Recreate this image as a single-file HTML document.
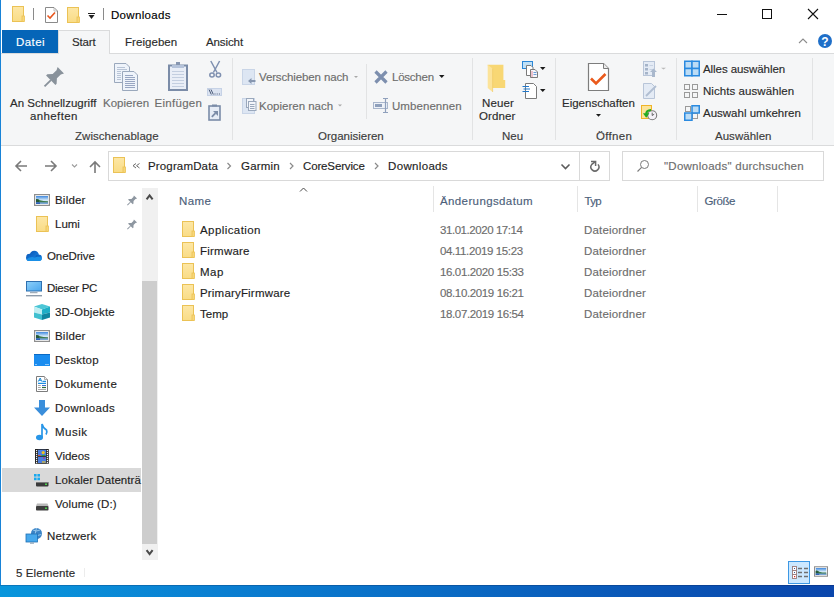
<!DOCTYPE html>
<html><head><meta charset="utf-8">
<style>
*{margin:0;padding:0;box-sizing:border-box}
html,body{width:834px;height:597px;overflow:hidden;background:#fff}
body{position:relative;font-family:"Liberation Sans",sans-serif;font-size:12px;color:#000}
.a{position:absolute}
.t{position:absolute;white-space:nowrap;line-height:14px;font-size:11.5px;-webkit-text-stroke:0.15px currentColor}
svg{position:absolute;overflow:visible}
</style></head><body>
<div class="a" style="left:0;top:585px;width:834px;height:12px;background:linear-gradient(90deg,#0996dc 0%,#0a80d2 25%,#0a6ec6 50%,#0a58b8 75%,#0a46ac 100%)"></div>
<div class="a" style="left:0;top:585px;width:834px;height:1px;background:linear-gradient(90deg,#0a78bc 0%,#0a58a4 50%,#0a3890 100%)"></div>
<div class="a" style="left:0;top:0;width:1px;height:585px;background:#1883d7"></div>
<div class="a" style="left:2px;top:30px;width:56px;height:23px;background:#0565b8"></div>
<div class="a" style="left:58px;top:30px;width:52px;height:24px;background:#f5f6f7;border:1px solid #dadbdc;border-bottom:none"></div>
<div class="a" style="left:1px;top:53px;width:833px;height:93px;background:#f5f6f7;border-top:1px solid #dadbdc;border-bottom:1px solid #dadbdc"></div>
<div class="a" style="left:59px;top:53px;width:50px;height:1px;background:#f5f6f7"></div>
<div class="a" style="left:232px;top:58px;width:1px;height:82px;background:#e2e3e4"></div>
<div class="a" style="left:366px;top:64px;width:1px;height:55px;background:#e2e3e4"></div>
<div class="a" style="left:472px;top:58px;width:1px;height:82px;background:#e2e3e4"></div>
<div class="a" style="left:555px;top:58px;width:1px;height:82px;background:#e2e3e4"></div>
<div class="a" style="left:676px;top:58px;width:1px;height:82px;background:#e2e3e4"></div>
<div class="a" style="left:812px;top:58px;width:1px;height:82px;background:#e2e3e4"></div>
<div class="a" style="left:108px;top:151px;width:502px;height:30px;border:1px solid #d9d9d9"></div>
<div class="a" style="left:579px;top:151px;width:1px;height:30px;background:#d9d9d9"></div>
<div class="a" style="left:622px;top:151px;width:202px;height:30px;border:1px solid #d9d9d9"></div>
<div class="a" style="left:2px;top:468px;width:139px;height:24px;background:#d9d9d9"></div>
<div class="a" style="left:142px;top:188px;width:16px;height:372px;background:#f0f0f0"></div>
<div class="a" style="left:142px;top:281px;width:15px;height:263px;background:#cdcdcd"></div>
<div class="a" style="left:433px;top:186px;width:1px;height:26px;background:#e5e5e5"></div>
<div class="a" style="left:577px;top:186px;width:1px;height:26px;background:#e5e5e5"></div>
<div class="a" style="left:697px;top:186px;width:1px;height:26px;background:#e5e5e5"></div>
<div class="a" style="left:777px;top:186px;width:1px;height:26px;background:#e5e5e5"></div>
<div class="t" style="left:111px;top:8.0px;color:#000;letter-spacing:0.312px">Downloads</div>
<div class="t" style="left:16px;top:35.0px;color:#fff;letter-spacing:0.450px">Datei</div>
<div class="t" style="left:72px;top:35.0px;color:#2b2b2b;letter-spacing:-0.175px">Start</div>
<div class="t" style="left:125px;top:35.0px;color:#2b2b2b;letter-spacing:0.050px">Freigeben</div>
<div class="t" style="left:206px;top:35.0px;color:#2b2b2b;letter-spacing:-0.100px">Ansicht</div>
<div class="t" style="left:10px;top:96.0px;color:#2b2b2b;letter-spacing:0.019px">An Schnellzugriff</div>
<div class="t" style="left:30px;top:108.5px;color:#2b2b2b;letter-spacing:0.371px">anheften</div>
<div class="t" style="left:103px;top:96.0px;color:#6d6d6d;letter-spacing:0.000px">Kopieren</div>
<div class="t" style="left:154.5px;top:96.0px;color:#6d6d6d;letter-spacing:0.286px">Einfügen</div>
<div class="t" style="left:75px;top:129.0px;color:#3c3c3c;letter-spacing:0.046px">Zwischenablage</div>
<div class="t" style="left:259px;top:70.0px;color:#6d6d6d;letter-spacing:-0.133px">Verschieben nach</div>
<div class="t" style="left:259px;top:99.0px;color:#6d6d6d;letter-spacing:0.000px">Kopieren nach</div>
<div class="t" style="left:392px;top:70.0px;color:#6d6d6d;letter-spacing:-0.233px">Löschen</div>
<div class="t" style="left:392px;top:99.0px;color:#6d6d6d;letter-spacing:0.067px">Umbenennen</div>
<div class="t" style="left:318px;top:129.0px;color:#3c3c3c;letter-spacing:-0.009px">Organisieren</div>
<div class="t" style="left:482px;top:96.0px;color:#2b2b2b;letter-spacing:0.150px">Neuer</div>
<div class="t" style="left:479px;top:108.5px;color:#2b2b2b;letter-spacing:0.100px">Ordner</div>
<div class="t" style="left:502px;top:129.0px;color:#3c3c3c;letter-spacing:0.050px">Neu</div>
<div class="t" style="left:562px;top:96.0px;color:#2b2b2b;letter-spacing:0.000px">Eigenschaften</div>
<div class="t" style="left:596px;top:129.0px;color:#3c3c3c;letter-spacing:0.320px">Öffnen</div>
<div class="t" style="left:703px;top:62.0px;color:#2b2b2b;letter-spacing:-0.071px">Alles auswählen</div>
<div class="t" style="left:703px;top:84.0px;color:#2b2b2b;letter-spacing:0.067px">Nichts auswählen</div>
<div class="t" style="left:703px;top:106.0px;color:#2b2b2b;letter-spacing:0.000px">Auswahl umkehren</div>
<div class="t" style="left:715px;top:129.0px;color:#3c3c3c;letter-spacing:0.025px">Auswählen</div>
<div class="t" style="left:148px;top:159.0px;color:#1e1e1e;letter-spacing:0.150px">ProgramData</div>
<div class="t" style="left:241px;top:159.0px;color:#1e1e1e;letter-spacing:0.200px">Garmin</div>
<div class="t" style="left:303px;top:159.0px;color:#1e1e1e;letter-spacing:-0.140px">CoreService</div>
<div class="t" style="left:388px;top:159.0px;color:#1e1e1e;letter-spacing:0.338px">Downloads</div>
<div class="t" style="left:664px;top:159.0px;color:#6d6d6d;letter-spacing:0.250px">"Downloads" durchsuchen</div>
<div class="t" style="left:55px;top:193.0px;color:#1e1e1e;letter-spacing:0.200px">Bilder</div>
<div class="t" style="left:55px;top:217.0px;color:#1e1e1e;letter-spacing:0.000px">Lumi</div>
<div class="t" style="left:47px;top:249.0px;color:#1e1e1e;letter-spacing:-0.100px">OneDrive</div>
<div class="t" style="left:47px;top:281.0px;color:#1e1e1e;letter-spacing:-0.250px">Dieser PC</div>
<div class="t" style="left:55px;top:305.0px;color:#1e1e1e;letter-spacing:0.167px">3D-Objekte</div>
<div class="t" style="left:55px;top:329.0px;color:#1e1e1e;letter-spacing:0.200px">Bilder</div>
<div class="t" style="left:55px;top:353.0px;color:#1e1e1e;letter-spacing:0.233px">Desktop</div>
<div class="t" style="left:55px;top:377.0px;color:#1e1e1e;letter-spacing:0.375px">Dokumente</div>
<div class="t" style="left:55px;top:401.0px;color:#1e1e1e;letter-spacing:0.350px">Downloads</div>
<div class="t" style="left:55px;top:425.0px;color:#1e1e1e;letter-spacing:0.500px">Musik</div>
<div class="t" style="left:55px;top:449.0px;color:#1e1e1e;letter-spacing:-0.040px">Videos</div>
<div class="t" style="left:55px;top:497.0px;color:#1e1e1e;letter-spacing:0.080px">Volume (D:)</div>
<div class="t" style="left:47px;top:529.0px;color:#1e1e1e;letter-spacing:0.186px">Netzwerk</div>
<div class="t" style="left:179px;top:194.0px;color:#4c607a;letter-spacing:0.433px">Name</div>
<div class="t" style="left:440px;top:194.0px;color:#4c607a;letter-spacing:0.385px">Änderungsdatum</div>
<div class="t" style="left:584.5px;top:194.0px;color:#4c607a;letter-spacing:-0.700px">Typ</div>
<div class="t" style="left:704.5px;top:194.0px;color:#4c607a;letter-spacing:-0.425px">Größe</div>
<div class="t" style="left:200px;top:223.0px;color:#1e1e1e;letter-spacing:0.420px">Application</div>
<div class="t" style="left:440px;top:223.0px;color:#6d6d6d;letter-spacing:-0.440px">31.01.2020 17:14</div>
<div class="t" style="left:584px;top:223.0px;color:#6d6d6d;letter-spacing:0.170px">Dateiordner</div>
<div class="t" style="left:200px;top:244.0px;color:#1e1e1e;letter-spacing:0.229px">Firmware</div>
<div class="t" style="left:440px;top:244.0px;color:#6d6d6d;letter-spacing:-0.373px">04.11.2019 15:23</div>
<div class="t" style="left:584px;top:244.0px;color:#6d6d6d;letter-spacing:0.170px">Dateiordner</div>
<div class="t" style="left:200px;top:265.0px;color:#1e1e1e;letter-spacing:0.500px">Map</div>
<div class="t" style="left:440px;top:265.0px;color:#6d6d6d;letter-spacing:-0.373px">16.01.2020 15:33</div>
<div class="t" style="left:584px;top:265.0px;color:#6d6d6d;letter-spacing:0.170px">Dateiordner</div>
<div class="t" style="left:200px;top:286.0px;color:#1e1e1e;letter-spacing:0.186px">PrimaryFirmware</div>
<div class="t" style="left:440px;top:286.0px;color:#6d6d6d;letter-spacing:-0.373px">08.10.2019 16:21</div>
<div class="t" style="left:584px;top:286.0px;color:#6d6d6d;letter-spacing:0.170px">Dateiordner</div>
<div class="t" style="left:200px;top:307.0px;color:#1e1e1e;letter-spacing:0.000px">Temp</div>
<div class="t" style="left:440px;top:307.0px;color:#6d6d6d;letter-spacing:-0.373px">18.07.2019 16:54</div>
<div class="t" style="left:584px;top:307.0px;color:#6d6d6d;letter-spacing:0.170px">Dateiordner</div>
<div class="t" style="left:16px;top:566.0px;color:#2b2b2b;letter-spacing:0.111px">5 Elemente</div>
<div class="t" style="left:55px;top:473.0px;color:#1e1e1e;letter-spacing:0.053px">Lokaler Datenträ</div>
<svg width="834" height="597" style="left:0;top:0">
<defs>
<linearGradient id="fold" x1="0" y1="0" x2="0" y2="1"><stop offset="0" stop-color="#fde7a6"/><stop offset="1" stop-color="#f9dc86"/></linearGradient>
<linearGradient id="sky" x1="0" y1="0" x2="0" y2="1"><stop offset="0" stop-color="#3d8fd8"/><stop offset="0.45" stop-color="#a9d3f0"/><stop offset="0.6" stop-color="#4f8a5a"/><stop offset="1" stop-color="#2f5e3c"/></linearGradient>
<linearGradient id="sky2" x1="0" y1="0" x2="0" y2="1"><stop offset="0" stop-color="#3f88de"/><stop offset="0.5" stop-color="#cfe6f7"/><stop offset="1" stop-color="#e8f3fa"/></linearGradient>
<linearGradient id="cloud" x1="0" y1="0" x2="1" y2="1"><stop offset="0" stop-color="#0a58b8"/><stop offset="0.55" stop-color="#1270d0"/><stop offset="1" stop-color="#1c96ea"/></linearGradient>
<symbol id="pic" viewBox="0 0 16 12" width="16" height="12">
 <rect x="0.6" y="0.6" width="14.8" height="10.8" fill="#fff" stroke="#8e8e8e" stroke-width="1.2"/>
 <rect x="2" y="2" width="12" height="8" fill="url(#sky2)"/>
 <path d="M2 5 Q4 4.5 6 6.2 Q9 7.2 14 7.2 V10 H2 Z" fill="#3d7a4c"/>
 <path d="M2 5.3 Q3.5 5 5 6.3 V8 H2 Z" fill="#25573a"/>
 <path d="M2 8.3 H14 V10 H2 Z" fill="#7aa6d6"/>
 <path d="M2 8.3 H6 V10 H2 Z" fill="#2f62b8"/>
</symbol>
<linearGradient id="mon" x1="0" y1="0" x2="1" y2="1"><stop offset="0" stop-color="#8ed0fa"/><stop offset="1" stop-color="#4aa6ee"/></linearGradient>
</defs>
<!-- title bar icons -->
<g>
 <rect x="12.5" y="6.5" width="11" height="15" fill="url(#fold)" stroke="#ebc255"/>
 <rect x="22" y="16" width="2.5" height="5.5" fill="#f7d679" stroke="#ebc255" stroke-width="0.8"/>
 <rect x="33" y="8" width="1" height="12" fill="#8a8a8a"/>
 <path d="M45.5 7.5 H54 L57.5 11 V22.5 H45.5 Z" fill="#fff" stroke="#8a8a8a"/>
 <path d="M54 8 V11 H57" fill="none" stroke="#b0b0b0" stroke-width="0.8"/>
 <path d="M47.5 15.5 L50 18 L55 12.5" fill="none" stroke="#e8561e" stroke-width="1.6"/>
 <rect x="67.5" y="7.5" width="11" height="15" fill="url(#fold)" stroke="#ebc255"/>
 <rect x="77" y="17" width="2.5" height="5.5" fill="#f7d679" stroke="#ebc255" stroke-width="0.8"/>
 <rect x="88" y="13" width="7" height="1" fill="#222"/>
 <path d="M88.5 15 H94.5 L91.5 19 Z" fill="#222"/>
 <rect x="103" y="8" width="1" height="12" fill="#8a8a8a"/>
</g>
<!-- window controls -->
<rect x="717" y="14" width="10" height="1" fill="#111"/>
<rect x="762.5" y="9.5" width="9" height="9" fill="none" stroke="#111"/>
<path d="M808 9 L818 19 M818 9 L808 19" stroke="#111" stroke-width="1.1"/>
<path d="M799 43 L803 39 L807 43" fill="none" stroke="#8c8c8c" stroke-width="1.1"/>
<circle cx="825" cy="41" r="7" fill="#1f6fc8"/>
<text x="825" y="45.5" font-family="Liberation Sans" font-weight="bold" font-size="12" fill="#fff" text-anchor="middle">?</text>

<!-- ribbon: pin -->
<g transform="translate(60.8,70.2) rotate(45)">
 <path d="M-4.5 0 H4.5 L3 3 V8.5 L6.6 12.5 V14.2 H-6.6 V12.5 L-3 8.5 V3 Z" fill="#89929b"/>
 <rect x="-0.9" y="14" width="1.8" height="9" fill="#89929b"/>
</g>
<!-- Kopieren -->
<g stroke="#9aa8bc" fill="#eef3fa">
 <path d="M114.5 63.5 H126 L129.5 67 V82.5 H114.5 Z"/>
 <path d="M122.5 71.5 H134 L137.5 75 V90.5 H122.5 Z"/>
</g>
<g stroke="#b8c4d6" stroke-width="1">
 <path d="M117 67.5 H125 M117 69.5 H127 M117 71.5 H121 M117 73.5 H121 M117 75.5 H121 M117 77.5 H121 M117 79.5 H121"/>
 <path d="M125 75.5 H133 M125 77.5 H135 M125 79.5 H135 M125 81.5 H135 M125 83.5 H135 M125 85.5 H135 M125 87.5 H135" stroke="#98a6c2"/>
</g>
<!-- Einfuegen clipboard -->
<rect x="169" y="65.5" width="18" height="24.5" fill="#e9eef7" stroke="#7b8ca8" stroke-width="2"/>
<rect x="176" y="62" width="4" height="4" fill="#8796b0"/>
<rect x="172" y="65" width="12" height="3" fill="#b5c3da"/>
<path d="M172 71.5 H184 M172 74.5 H184 M172 77.5 H184 M172 80.5 H184 M172 83.5 H184 M172 86.5 H184" stroke="#c3cee0"/>
<!-- scissors -->
<g stroke="#7f90b0" fill="none" stroke-width="1.5">
 <path d="M210.8 61 L217 72.5 M219.6 61 L213.4 72.5"/>
 <ellipse cx="212" cy="75" rx="2.2" ry="2"/>
 <ellipse cx="218.4" cy="75" rx="2.2" ry="2"/>
</g>
<!-- path copy -->
<rect x="207.5" y="88.5" width="14" height="7" fill="#dbe3f1" stroke="#c6d2e6"/>
<path d="M209 89.5 L211.3 94.5 M211 89.5 L213.3 94.5" stroke="#4a5a78" stroke-width="1"/>
<path d="M214.5 94 h1 M216.7 94 h1 M218.9 94 h1" stroke="#4a5a78" stroke-width="1.2"/>
<!-- paste shortcut -->
<rect x="209" y="106" width="11" height="14" fill="#e6ecf6" stroke="#7b8ca8" stroke-width="1.6"/>
<rect x="212" y="104.5" width="5" height="2" fill="#7b8ca8"/>
<path d="M211.8 116.8 L215.5 113.1" stroke="#7b8ca8" stroke-width="1.8" fill="none"/>
<path d="M213 111 H218 V116 Z" fill="#7b8ca8"/>
<!-- Verschieben nach -->
<rect x="242.5" y="69.5" width="12" height="15" fill="#dde6f3" stroke="#c9d5e7"/>
<path d="M248 81 L251.5 78 V80 H255.5 V82 H251.5 V84 Z" fill="#8797b0"/>
<!-- Kopieren nach -->
<rect x="242.5" y="98.5" width="12" height="15" fill="#dde6f3" stroke="#c9d5e7"/>
<rect x="246.5" y="98.5" width="7" height="9" fill="#f2f5fa" stroke="#9aa8bc"/>
<rect x="248.5" y="101.5" width="7.5" height="9" fill="#f2f5fa" stroke="#9aa8bc"/>
<path d="M250 104.5 H254.5 M250 106.5 H254.5 M250 108.5 H254.5" stroke="#9aa8bc"/>
<path d="M354 76 H358 L356 78 Z" fill="#a8a8a8"/>
<path d="M338 104.5 H342 L340 106.5 Z" fill="#a8a8a8"/>
<!-- Loeschen X -->
<path d="M375.5 71.5 L386.5 82.5 M386.5 71.5 L375.5 82.5" stroke="#7d8fae" stroke-width="3.2"/>
<path d="M439 75 H444.5 L441.75 78 Z" fill="#1a1a1a"/>
<!-- Umbenennen -->
<rect x="373.5" y="102.5" width="14" height="6" fill="#eef2f8" stroke="#a9b6cc"/>
<rect x="375" y="104" width="7" height="3" fill="#8fa0bc"/>
<path d="M385.5 98 V112.5 M383 98.5 H388 M383 112.5 H388" stroke="#8fa0bc" stroke-width="1.2"/>

<!-- Neuer Ordner -->
<path d="M487.7 64.8 H503.4 V80 H505.2 V88 H491 Z" fill="#f8d774"/>
<path d="M487.7 64.8 L492.6 68.5 V92 L487.7 88 Z" fill="#fce39a"/>
<path d="M492.6 68.5 V92" stroke="#f0cc66" stroke-width="0.7"/>
<!-- new item -->
<rect x="522.5" y="61.5" width="10" height="7" fill="#bfe0f7" stroke="#2b86d6"/>
<path d="M526.5 65.5 H531 L533 67.5 V75.5 H526.5 Z" fill="#fff" stroke="#7a7a7a"/>
<path d="M530.5 69.5 H535 L537.5 72 V77.5 H530.5 Z" fill="#f4f6fb" stroke="#7a7a7a"/>
<path d="M532 71 V77" stroke="#e58c9c"/>
<path d="M533.5 72.5 H536.5 M533.5 74.5 H536.5" stroke="#6b9bd6"/>
<path d="M540 67 H545.5 L542.75 70 Z" fill="#1a1a1a"/>
<!-- easy access -->
<path d="M525.5 83.5 H533.5 L536.5 86.5 V98.5 H525.5 Z" fill="#fff" stroke="#7a7a7a"/>
<path d="M522.5 86.5 H529 M523.5 89 H530 M522.5 91.5 H529" stroke="#2178cc" stroke-width="1.2"/>
<path d="M540 89 H545.5 L542.75 92 Z" fill="#1a1a1a"/>

<!-- Eigenschaften -->
<path d="M588.5 63.5 H603.5 L608.5 68.5 V90.5 H588.5 Z" fill="#fff" stroke="#7d7d7d" stroke-width="1.2"/>
<path d="M603.5 63.5 V68.5 H608.5" fill="#ececec" stroke="#7d7d7d" stroke-width="1"/>
<path d="M591 78.5 L596 83.5 L605.5 74" fill="none" stroke="#ea5a1c" stroke-width="2.6"/>
<path d="M596 114 H601 L598.5 116.8 Z" fill="#1a1a1a"/>
<!-- open (disabled) -->
<rect x="643.5" y="61.5" width="11" height="14" fill="#e4ebf5" stroke="#b8c5d8"/>
<path d="M645 64 h3 v2.5 h-3z M645 68 h3 v2.5 h-3z M645 72 h3 v2.5 h-3z" fill="#a5b4c9"/>
<path d="M649.5 65.5 H653 M649.5 69.5 H653" stroke="#c7d2e2"/>
<path d="M650 72 L653.5 68.5 L657 72 H655 V77 H652 V72 Z" fill="#a9b8cc"/>
<path d="M661 67.7 H666 L663.5 69.6 Z" fill="#b9b9b9"/>
<!-- edit (disabled) -->
<path d="M643.5 83.5 H651.5 L654.5 86.5 V98.5 H643.5 Z" fill="#e4ebf5" stroke="#b8c5d8"/>
<path d="M646 96 L656 86" stroke="#b0bed2" stroke-width="1.8"/>
<!-- history -->
<rect x="641.5" y="105.5" width="10" height="13" fill="#fbe49a" stroke="#f0b428"/>
<circle cx="652.2" cy="115.3" r="4.5" fill="#f4f2f8" stroke="#7a7a7a" stroke-width="1.1"/>
<path d="M652.2 112.6 V115.5 L654.2 114.2" stroke="#444" stroke-width="0.8" fill="none"/>
<path d="M651 110 Q646.5 110.2 646.2 113.8" stroke="#22aa22" stroke-width="2.2" fill="none"/>
<path d="M643 113.2 H649.4 L646.2 117.8 Z" fill="#22aa22"/>

<!-- Alles auswaehlen -->
<g fill="#bcdcf5" stroke="#2a8ae0" stroke-width="1.5">
 <rect x="684.75" y="61.25" width="7.25" height="7.25"/>
 <rect x="692" y="61.25" width="7.25" height="7.25"/>
 <rect x="684.75" y="68.5" width="7.25" height="7.25"/>
 <rect x="692" y="68.5" width="7.25" height="7.25"/>
</g>
<!-- Nichts -->
<g fill="none" stroke="#9a9a9a">
 <rect x="684.5" y="84.5" width="5" height="5"/>
 <rect x="692.5" y="84.5" width="5" height="5"/>
 <rect x="684.5" y="92.5" width="5" height="5"/>
 <rect x="692.5" y="92.5" width="5" height="5"/>
</g>
<!-- Umkehren -->
<g fill="none" stroke="#9a9a9a">
 <rect x="685.5" y="106.5" width="5" height="5"/>
 <rect x="692.5" y="113.5" width="5" height="5"/>
</g>
<g fill="#bcdcf5" stroke="#2a8ae0" stroke-width="1.5">
 <rect x="692" y="105.75" width="7.25" height="7.25"/>
 <rect x="684.75" y="113" width="7.25" height="7.25"/>
</g>

<!-- nav arrows -->
<g stroke="#7a7a7a" stroke-width="1.6" fill="none">
 <path d="M27 166 H16 M21 161 L16 166 L21 171"/>
 <path d="M45 166 H56 M51 161 L56 166 L51 171"/>
 <path d="M95 173 V162 M90 167 L95 162 L100 167"/>
</g>
<path d="M72 164.5 L74.5 167 L77 164.5" stroke="#9c9c9c" stroke-width="1.1" fill="none"/>
<!-- address folder -->
<rect x="113.5" y="157.5" width="11" height="15" fill="url(#fold)" stroke="#ebc255"/>
<rect x="123" y="167" width="2.5" height="5.5" fill="#f7d679" stroke="#ebc255" stroke-width="0.8"/>
<path d="M136 163.5 L133 165.7 L136 168 M139.5 163.5 L136.5 165.7 L139.5 168" stroke="#6a6a6a" stroke-width="1" fill="none"/>
<g stroke="#8a8a8a" stroke-width="1.2" fill="none">
 <path d="M227.5 163 L230.5 166 L227.5 169"/>
 <path d="M290 163 L293 166 L290 169"/>
 <path d="M375 163 L378 166 L375 169"/>
</g>
<path d="M561.5 164.5 L565.5 168.5 L569.5 164.5" stroke="#5c5c5c" stroke-width="1.6" fill="none"/>
<path d="M598 164.4 A4 4 0 1 1 591.8 164.4 L595 161.8" stroke="#6a6a6a" stroke-width="1.5" fill="none"/>
<path d="M591 161.6 H595.6 V166" stroke="#6a6a6a" stroke-width="1.5" fill="none"/>
<!-- search icon -->
<circle cx="644.5" cy="164.5" r="4" stroke="#7a7a7a" stroke-width="1" fill="none"/>
<path d="M641.6 167.4 L637.5 171.5" stroke="#7a7a7a" stroke-width="1.1"/>

<!-- column sort arrow -->
<path d="M300 191.5 L303.5 188 L307 191.5" stroke="#4a4a4a" stroke-width="1" fill="none"/>

<!-- nav pins -->
<g transform="translate(135.5,197) rotate(45) scale(0.5)"><path d="M-4.5 0 H4.5 L3 3 V8.5 L6.6 12.5 V14.2 H-6.6 V12.5 L-3 8.5 V3 Z" fill="#8d96a0"/><rect x="-0.9" y="14" width="1.8" height="9" fill="#8d96a0"/></g>
<g transform="translate(135.5,221) rotate(45) scale(0.5)"><path d="M-4.5 0 H4.5 L3 3 V8.5 L6.6 12.5 V14.2 H-6.6 V12.5 L-3 8.5 V3 Z" fill="#8d96a0"/><rect x="-0.9" y="14" width="1.8" height="9" fill="#8d96a0"/></g>

<!-- nav icons -->
<!-- Bilder (quick) -->
<use href="#pic" x="34" y="194"/>
<!-- Lumi folder -->
<rect x="36.5" y="216.5" width="11" height="15" fill="url(#fold)" stroke="#ebc255"/>
<rect x="46" y="226" width="2.5" height="5.5" fill="#f7d679" stroke="#ebc255" stroke-width="0.8"/>
<!-- OneDrive cloud -->
<g fill="url(#cloud)"><circle cx="29.6" cy="257.4" r="3.6"/><circle cx="34.3" cy="255.3" r="4.6"/><circle cx="38.6" cy="257.7" r="3.3"/><rect x="29.6" y="257" width="9" height="4"/></g>
<path d="M26.5 259.5 Q30 256 35 257.5 Q38.5 255.8 41.9 258.2 Q41.8 261 38.6 261 H29.6 Q27 261 26.5 259.5 Z" fill="#1a8fe6"/>
<!-- Dieser PC -->
<rect x="26.5" y="281.5" width="15" height="9.5" fill="url(#mon)" stroke="#2f70b0"/>
<rect x="30" y="292.2" width="7.5" height="1" fill="#8a9aa8"/>
<rect x="26" y="295" width="16" height="1.4" fill="#8e9cab"/>
<!-- 3D objects cube -->
<path d="M34 306.5 L42 304 L50 306.5 L42 309.5 Z" fill="#4cc6d6"/>
<path d="M34 306.5 L42 309.5 V314.5 L34 312.5 Z" fill="#bfeef2"/>
<path d="M34 312.5 L42 314.5 V320 L34 317.5 Z" fill="#40c0d0"/>
<path d="M42 309.5 L50 306.5 V312.5 L42 314.5 Z" fill="#1eaec6"/>
<path d="M42 314.5 L50 312.5 V317.5 L42 320 Z" fill="#0f86a0"/>
<!-- Bilder -->
<use href="#pic" x="34" y="330"/>
<!-- Desktop -->
<rect x="34" y="354" width="16" height="12" fill="#1a8cef"/>
<rect x="34" y="354" width="16" height="1" fill="#0b6ac4"/>
<path d="M35.5 364.5 h1 M47.5 364.5 h1 M45.5 364.5 h1" stroke="#fff"/>
<!-- Dokumente -->
<path d="M36.5 376.5 H44.5 L47.5 379.5 V391.5 H36.5 Z" fill="#fff" stroke="#7c7c7c"/>
<path d="M44.5 376.5 V379.5 H47.5" fill="#eee" stroke="#9a9a9a" stroke-width="0.8"/>
<path d="M38.2 381.6 L40.2 378 L41.8 381.6 M39 380.3 H41" stroke="#1a8ad8" stroke-width="1" fill="none"/>
<path d="M42.5 381.3 H46 M38 383.3 H46" stroke="#1f8ee0" stroke-width="1.2"/>
<path d="M38 385.5 H40.8 M38 387.5 H40.8 M38 389.5 H46" stroke="#a8a8a8" stroke-width="1"/>
<path d="M42 385.5 H46" stroke="#3a70d0" stroke-width="1"/>
<path d="M42 387.5 H46" stroke="#2a6a3a" stroke-width="1.2"/>
<!-- Downloads arrow -->
<path d="M39 400 H45 V407.5 H50 L42 416 L34 407.5 H39 Z" fill="#3a8edb"/>
<!-- Musik note -->
<ellipse cx="39.5" cy="437.5" rx="3.5" ry="2.7" fill="#2896e8"/>
<path d="M42 437 V424 Q43 428 46.5 430 Q47.5 432 46 434.5" stroke="#2896e8" stroke-width="1.7" fill="none"/>
<!-- Videos film -->
<rect x="35" y="449" width="13.8" height="14.8" fill="#262626"/>
<rect x="38" y="449.8" width="8" height="6.2" fill="#4a7ee0"/>
<rect x="38" y="456.8" width="8" height="6.2" fill="#4a7ee0"/>
<circle cx="43.2" cy="452.6" r="1.6" fill="#f0c020"/>
<path d="M38.2 455.5 h2.5" stroke="#e8502a" stroke-width="1"/>
<path d="M41.5 455.5 h4" stroke="#2a9a40" stroke-width="1"/>
<path d="M42 462 h3.5" stroke="#e8c020" stroke-width="1.2"/>
<path d="M43 458 h2" stroke="#c02a6a" stroke-width="1"/>
<g fill="#f4f4f4">
<rect x="36" y="450" width="1.2" height="1.2"/><rect x="36" y="452" width="1.2" height="1.2"/><rect x="36" y="454" width="1.2" height="1.2"/><rect x="36" y="456" width="1.2" height="1.2"/><rect x="36" y="458" width="1.2" height="1.2"/><rect x="36" y="460" width="1.2" height="1.2"/><rect x="36" y="462" width="1.2" height="1.2"/>
<rect x="46.8" y="450" width="1.2" height="1.2"/><rect x="46.8" y="452" width="1.2" height="1.2"/><rect x="46.8" y="454" width="1.2" height="1.2"/><rect x="46.8" y="456" width="1.2" height="1.2"/><rect x="46.8" y="458" width="1.2" height="1.2"/><rect x="46.8" y="460" width="1.2" height="1.2"/><rect x="46.8" y="462" width="1.2" height="1.2"/>
</g>
<!-- Lokaler drive -->
<g fill="#18a8ee"><rect x="34" y="474" width="2.6" height="2.6"/><rect x="37.4" y="474" width="2.6" height="2.6"/><rect x="34" y="477.6" width="2.6" height="2.6"/><rect x="37.4" y="477.6" width="2.6" height="2.6"/></g>
<rect x="36" y="482" width="12.5" height="4.5" rx="1" fill="#3a3a3a"/>
<rect x="36" y="482" width="12.5" height="1" fill="#7a7a7a"/>
<rect x="45" y="483.5" width="2" height="1.5" fill="#4cd04c"/>
<!-- Volume drive -->
<path d="M37 503.5 H47.5 L48.5 506 H36 Z" fill="#b9b9b9"/>
<rect x="36" y="506" width="12.5" height="4.5" rx="0.8" fill="#3f3f3f"/>
<rect x="45" y="507.5" width="2" height="1.5" fill="#4cd04c"/>
<!-- Netzwerk -->
<circle cx="36.5" cy="533.5" r="5.5" fill="#3b84c6"/>
<path d="M33 530 Q36 532 40 530 M32 535 Q36 537 41 534.5 M36.5 528 Q34 533.5 36.5 539" stroke="#a8d4f4" stroke-width="0.8" fill="none"/>
<rect x="26" y="534" width="11.5" height="8" fill="#47a8ec" stroke="#1f6fb4" stroke-width="0.8"/>
<rect x="30" y="542.5" width="4" height="1.2" fill="#8aa0b4"/>

<!-- scrollbar arrows -->
<path d="M146.6 199.4 L149.6 195.4 L152.6 199.4" stroke="#4a4a4a" stroke-width="2" fill="none"/>
<path d="M146.6 550.2 L149.6 554.2 L152.6 550.2" stroke="#4a4a4a" stroke-width="2" fill="none"/>

<!-- file folders -->
<g id="ff">
<rect x="182.5" y="221.5" width="11" height="15" fill="url(#fold)" stroke="#ebc255"/>
<rect x="192" y="231" width="2.5" height="5.5" fill="#f7d679" stroke="#ebc255" stroke-width="0.8"/>
</g>
<use href="#ff" y="21"/><use href="#ff" y="42"/><use href="#ff" y="63"/><use href="#ff" y="84"/>

<rect x="84" y="568" width="1" height="9" fill="#ececec"/>
<!-- view buttons -->
<rect x="788.5" y="561.5" width="21" height="22" fill="#cce8ff" stroke="#3d98e4"/>
<g fill="#fff" stroke="#9a7a7a" stroke-width="0.9">
 <rect x="792.5" y="566.5" width="4" height="4"/><rect x="792.5" y="570.5" width="4" height="4"/><rect x="792.5" y="574.5" width="4" height="4"/>
</g>
<rect x="794" y="568" width="1" height="1" fill="#3a5a9a"/><rect x="794" y="572" width="1" height="1" fill="#3a5a9a"/><rect x="794" y="576" width="1.2" height="1.2" fill="#e02020"/>
<path d="M798 568.5 H802 M804 568.5 H808 M798 572.5 H802 M804 572.5 H808 M798 576.5 H802 M804 576.5 H808" stroke="#707070" stroke-width="1.3"/>
<use href="#pic" x="814" y="566" width="14" height="11"/>
</svg>
</body></html>
